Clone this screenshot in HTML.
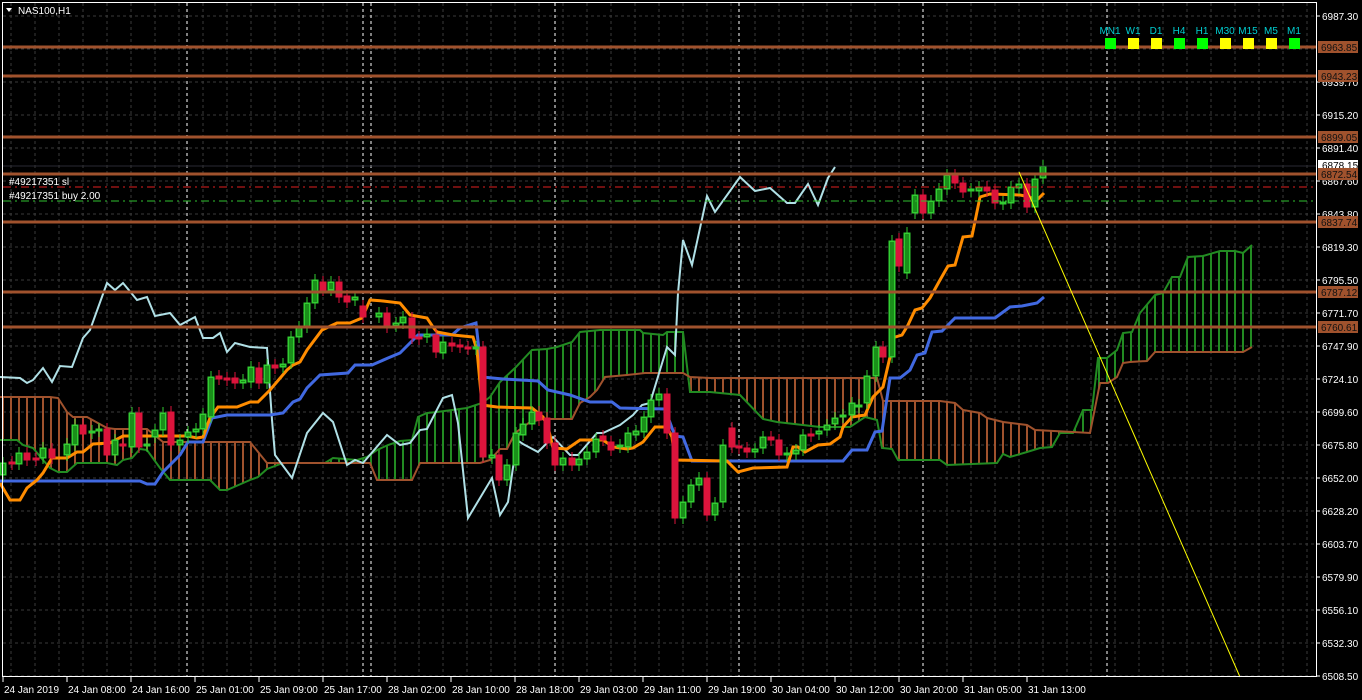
<!DOCTYPE html>
<html><head><meta charset="utf-8">
<style>
html,body{margin:0;padding:0;background:#000;width:1362px;height:700px;overflow:hidden}
svg{display:block}
text{font-family:"Liberation Sans",sans-serif;font-size:10px}
</style></head><body>
<svg id="s" width="1362" height="700" xmlns="http://www.w3.org/2000/svg">
<rect width="1362" height="700" fill="#000"/>
<g id="grid"></g>
<g id="cloud"></g>
<g id="lines"></g>
<g id="cand"></g>
<g id="over"></g>
</svg>
<script>
var NS="http://www.w3.org/2000/svg";
function el(p,t,a,txt){var e=document.createElementNS(NS,t);for(var k in a)e.setAttribute(k,a[k]);if(txt!=null)e.textContent=txt;document.getElementById(p).appendChild(e);return e;}
function pts(a){return a.map(function(p){return p[0]+","+p[1]}).join(" ");}
// grid
var gy=[16,49,82,115,148,181,214,247,280,313,346,379,412,445,478,511,544,577,610,643,676];
gy.forEach(function(y){el("grid","line",{x1:3,x2:1316,y1:y,y2:y,stroke:"#3a3a3a","stroke-dasharray":"3,3"});});
for(var x=11;x<1316;x+=24){el("grid","line",{x1:x,x2:x,y1:3,y2:676,stroke:"#3a3a3a","stroke-dasharray":"3,3"});}
[187,363,371,555,739,923,1107].forEach(function(x){el("grid","line",{x1:x,x2:x,y1:3,y2:676,stroke:"#fff","stroke-dasharray":"3,3"});});
// cloud
var A=[[0,440],[17,440],[23,445],[33,448],[43,460],[50,468],[58,472],[67,472],[77,463],[107,463],[117,465],[123,460],[132,458],[140,449],[147,450],[160,468],[170,480],[210,480],[220,490],[227,490],[250,480],[258,477],[267,469],[283,463],[325,463],[333,458],[357,460],[367,457],[377,450],[388,445],[400,441],[412,440],[418,417],[427,413],[437,412],[452,410],[467,408],[482,403],[490,397],[500,382],[515,368],[532,350],[547,349],[557,347],[572,342],[580,332],[600,330],[640,330],[643,333],[663,335],[667,332],[683,332],[690,392],[710,392],[740,395],[763,419],[777,422],[820,427],[850,427],[865,417],[877,420],[882,448],[892,449],[898,460],[940,460],[947,465],[997,463],[1003,454],[1010,457],[1027,452],[1040,448],[1052,447],[1060,433],[1073,433],[1083,410],[1092,410],[1098,358],[1107,358],[1117,350],[1123,333],[1132,332],[1140,313],[1155,295],[1163,293],[1172,277],[1180,277],[1188,257],[1203,256],[1220,251],[1235,251],[1243,253],[1252,245]];
var B=[[0,397],[50,397],[58,398],[67,412],[73,417],[87,417],[107,428],[115,429],[147,429],[163,442],[250,442],[267,463],[370,463],[377,480],[412,480],[420,463],[480,463],[490,460],[500,449],[507,449],[515,433],[530,422],[543,419],[572,419],[580,403],[590,397],[597,390],[605,377],[627,375],[645,373],[683,373],[690,377],[710,378],[877,378],[883,401],[940,401],[955,403],[963,410],[980,413],[987,418],[1003,422],[1027,425],[1035,430],[1073,432],[1090,433],[1100,383],[1108,383],[1117,377],[1123,363],[1130,362],[1147,361],[1155,352],[1243,352],[1252,347]];
function interp(a,x){for(var i=0;i<a.length-1;i++){if(x>=a[i][0]&&x<=a[i+1][0]){var t=(x-a[i][0])/((a[i+1][0]-a[i][0])||1);return a[i][1]+t*(a[i+1][1]-a[i][1]);}}return a[a.length-1][1];}
for(var x=3;x<=1252;x+=8){var ya=interp(A,x),yb=interp(B,x);el("cloud","line",{x1:x,x2:x,y1:ya,y2:yb,stroke:ya<yb?"#228b22":"#a0522d","stroke-width":2});}
el("cloud","polyline",{points:pts(A),fill:"none",stroke:"#228b22","stroke-width":2});
el("cloud","polyline",{points:pts(B),fill:"none",stroke:"#a0522d","stroke-width":2});
// horizontal levels
[[47,"6963.85"],[76,"6943.23"],[137,"6899.05"],[174,"6872.54"],[222,"6837.74"],[292,"6787.12"],[327,"6760.61"]].forEach(function(l){el("over","line",{x1:3,x2:1317,y1:l[0],y2:l[0],stroke:"#a0522d","stroke-width":3});});
el("over","line",{x1:3,x2:1316,y1:166,y2:166,stroke:"#2a2a33","stroke-width":1});
el("over","line",{x1:3,x2:1316,y1:187,y2:187,stroke:"#e02020","stroke-dasharray":"8,4,2,4"});
el("over","line",{x1:3,x2:1316,y1:201,y2:201,stroke:"#30c030","stroke-dasharray":"8,4,2,4"});
// lines
var LB=[[0,377],[20,378],[27,383],[33,380],[43,368],[52,382],[60,366],[72,367],[83,338],[90,330],[107,283],[115,290],[123,283],[137,300],[147,297],[155,316],[170,313],[180,325],[195,317],[203,338],[213,338],[220,333],[227,352],[235,343],[250,347],[267,348],[272,420],[275,455],[292,478],[307,433],[323,413],[333,422],[347,465],[355,460],[363,463],[387,435],[400,445],[410,443],[420,430],[427,429],[443,398],[452,395],[458,423],[468,518],[492,478],[500,515],[508,502],[517,440],[523,444],[538,452],[553,437],[570,455],[578,455],[597,433],[603,433],[620,425],[633,415],[642,405],[650,403],[667,347],[675,355],[678,293],[683,240],[692,265],[707,196],[715,212],[740,177],[755,191],[770,188],[787,203],[795,203],[808,184],[818,205],[828,178],[835,167]];
var OR=[[0,483],[10,500],[20,500],[27,488],[37,480],[43,473],[52,458],[67,458],[77,452],[83,452],[93,444],[110,443],[123,436],[187,436],[197,438],[203,437],[210,418],[218,407],[237,407],[250,402],[258,402],[270,390],[287,370],[293,365],[300,362],[307,350],[322,330],[337,323],[350,323],[362,318],[370,300],[383,301],[400,303],[410,315],[427,318],[433,327],[437,332],[453,335],[473,337],[477,350],[482,405],[497,407],[532,408],[543,417],[548,427],[553,448],[567,449],[580,440],[603,440],[613,447],[627,449],[633,448],[643,442],[655,427],[667,427],[672,437],[675,460],[727,461],[738,472],[753,468],[787,467],[793,447],[798,447],[805,452],[818,445],[830,444],[840,437],[843,427],[852,417],[865,415],[873,397],[883,387],[890,357],[892,338],[902,335],[908,325],[915,310],[922,308],[930,298],[940,280],[948,266],[955,265],[963,237],[972,236],[980,197],[990,194],[1020,195],[1030,197],[1035,202],[1044,193]];
var BL=[[0,481],[140,481],[147,484],[155,484],[163,472],[180,455],[188,442],[203,442],[212,418],[227,415],[270,415],[283,413],[293,402],[300,399],[307,388],[320,375],[348,373],[355,365],[372,365],[388,358],[400,353],[418,335],[452,335],[460,328],[476,323],[482,377],[503,379],[538,381],[548,390],[570,395],[590,402],[612,402],[620,408],[665,409],[675,436],[683,437],[692,461],[843,461],[852,450],[867,450],[875,432],[882,431],[890,378],[900,378],[910,370],[917,355],[925,353],[932,332],[942,331],[955,318],[995,318],[1010,307],[1022,306],[1037,303],[1044,297]];
el("lines","polyline",{points:pts(LB),fill:"none",stroke:"#b0e0e6","stroke-width":2});
// candles: x, top, bottom, color(g/r)
var C=[[3,463,475,'g'],[12,462,464,'r'],[19,453,464,'g'],[27,453,460,'r'],[36,458,460,'r'],[43,448,458,'g'],[52,449,458,'r'],[67,444,455,'g'],[75,425,445,'g'],[83,425,434,'r'],[92,431,433,'g'],[99,429,431,'g'],[107,429,455,'r'],[115,440,455,'g'],[123,444,446,'r'],[132,413,447,'g'],[139,413,447,'r'],[147,444,446,'g'],[155,430,437,'g'],[163,413,430,'g'],[171,412,445,'r'],[180,440,445,'g'],[188,432,437,'g'],[196,429,432,'g'],[203,414,429,'g'],[211,377,417,'g'],[219,376,379,'r'],[227,378,380,'r'],[235,378,383,'r'],[243,380,383,'g'],[251,367,382,'g'],[259,368,383,'r'],[267,365,383,'g'],[275,365,368,'r'],[283,364,367,'g'],[291,337,363,'g'],[299,327,337,'g'],[307,303,327,'g'],[315,280,303,'g'],[323,282,290,'r'],[331,282,290,'g'],[339,282,297,'r'],[347,296,302,'r'],[355,297,300,'g'],[363,306,317,'r'],[379,313,317,'g'],[387,313,327,'r'],[396,323,326,'g'],
[403,317,323,'g'],[412,318,338,'r'],[419,337,339,'r'],[427,334,337,'g'],[436,335,352,'r'],[443,342,353,'g'],[452,343,346,'r'],[460,345,347,'r'],[468,347,349,'r'],[476,347,349,'g'],[483,347,457,'r'],[492,455,458,'g'],[499,455,480,'r'],[507,465,480,'g'],[516,433,465,'g'],[523,424,435,'g'],[532,412,424,'g'],[539,412,420,'r'],[547,418,443,'r'],[555,443,465,'r'],[563,458,465,'g'],[572,458,465,'r'],[579,459,465,'g'],[587,452,459,'g'],[596,439,452,'g'],[603,436,440,'r'],[611,442,450,'r'],[620,445,447,'g'],[628,433,447,'g'],[636,431,435,'g'],[644,417,432,'g'],[651,400,417,'g'],[659,394,400,'g'],[667,394,433,'r'],[675,433,518,'r'],[683,502,518,'g'],[691,485,502,'g'],[699,478,485,'g'],[707,478,515,'r'],[715,503,515,'g'],[723,445,502,'g'],[732,428,447,'r'],[739,446,448,'r'],[747,448,452,'r'],[755,449,452,'g'],[763,437,448,'g'],[771,437,440,'r'],[779,440,455,'r'],[787,453,455,'g'],[796,450,454,'g'],[803,435,450,'g'],[811,434,436,'r'],[819,431,434,'g'],[827,425,430,'g'],[835,418,424,'g'],[843,415,417,'g'],[852,403,415,'g'],[859,405,407,'g'],[867,376,403,'g'],[876,347,376,'g'],[883,347,357,'r'],[892,241,357,'g'],[899,239,266,'r'],[907,233,273,'g'],[915,195,213,'g'],[923,195,213,'r'],[931,201,213,'g'],[939,189,201,'g'],[947,175,189,'g'],[955,175,183,'r'],[963,183,192,'r'],[971,189,191,'g'],[979,187,191,'g'],[987,187,191,'r'],[995,190,203,'r'],[1003,202,204,'g'],[1011,187,203,'g'],[1019,184,188,'g'],[1027,184,207,'r'],[1035,179,207,'g'],[1043,166,178,'g']];
C.forEach(function(c){var col=c[3]=='g'?'#32cd32':'#dc143c';
el("cand","line",{x1:c[0],x2:c[0],y1:c[1]-6,y2:c[2]+6,stroke:col});
el("cand","rect",{x:c[0]-3,y:c[1],width:6,height:Math.max(2,c[2]-c[1]),fill:col,stroke:c[3]=='g'?'#32cd32':'#dc143c'});
if(c[3]=='g')el("cand","rect",{x:c[0]-2,y:c[1]+1,width:4,height:Math.max(0,c[2]-c[1]-2),fill:"#1a8f1a"});});
el("lines","polyline",{points:pts(BL),fill:"none",stroke:"#4169e1","stroke-width":3});
el("lines","polyline",{points:pts(OR),fill:"none",stroke:"#ff8c00","stroke-width":3});
el("over","line",{x1:1019,y1:172,x2:1240,y2:677,stroke:"#ffff00","stroke-width":1});
// border
el("over","rect",{x:2.5,y:2.5,width:1314,height:674,fill:"none",stroke:"#fff"});
// axis labels
var al=[[16,"6987.30"],[82,"6939.70"],[115,"6915.20"],[148,"6891.40"],[181,"6867.60"],[214,"6843.80"],[247,"6819.30"],[280,"6795.50"],[313,"6771.70"],[346,"6747.90"],[379,"6724.10"],[412,"6699.60"],[445,"6675.80"],[478,"6652.00"],[511,"6628.20"],[544,"6603.70"],[577,"6579.90"],[610,"6556.10"],[643,"6532.30"],[676,"6508.50"]];
al.forEach(function(a){el("over","line",{x1:1317,x2:1320,y1:a[0],y2:a[0],stroke:"#fff"});el("over","text",{x:1322,y:a[0]+4,fill:"#fff"},a[1]);});
el("over","rect",{x:1318,y:160,width:40,height:11,fill:"#fff"});
el("over","text",{x:1322,y:169,fill:"#000"},"6878.15");
[[47,"6963.85"],[76,"6943.23"],[137,"6899.05"],[174,"6872.54"],[222,"6837.74"],[292,"6787.12"],[327,"6760.61"]].forEach(function(l){el("over","rect",{x:1318,y:l[0]-6,width:40,height:12,fill:"#a0522d"});el("over","text",{x:1321,y:l[0]+4,fill:"#111"},l[1]);});
var bl=["24 Jan 2019","24 Jan 08:00","24 Jan 16:00","25 Jan 01:00","25 Jan 09:00","25 Jan 17:00","28 Jan 02:00","28 Jan 10:00","28 Jan 18:00","29 Jan 03:00","29 Jan 11:00","29 Jan 19:00","30 Jan 04:00","30 Jan 12:00","30 Jan 20:00","31 Jan 05:00","31 Jan 13:00"];
bl.forEach(function(t,i){var x=3+i*64;el("over","line",{x1:x,x2:x,y1:677,y2:682,stroke:"#fff"});el("over","text",{x:x+1,y:693,fill:"#fff","font-size":"9.5px"},t);});
// title
el("over","polygon",{points:"6,8 12,8 9,12",fill:"#fff"});
el("over","text",{x:18,y:14,fill:"#fff"},"NAS100,H1");
el("over","text",{x:9,y:185,fill:"#fff","font-size":"9px"},"#49217351 sl");
el("over","text",{x:9,y:199,fill:"#fff","font-size":"9px"},"#49217351 buy 2.00");
// TF panel
var tf=[["MN1",1110,"#00ff00"],["W1",1133,"#ffff00"],["D1",1156,"#ffff00"],["H4",1179,"#00ff00"],["H1",1202,"#00ff00"],["M30",1225,"#ffff00"],["M15",1248,"#ffff00"],["M5",1271,"#ffff00"],["M1",1294,"#00ff00"]];
tf.forEach(function(t){el("over","text",{x:t[1],y:34,fill:"#00ced1","text-anchor":"middle","font-size":"11px"},t[0]);el("over","rect",{x:t[1]-5,y:38,width:11,height:11,fill:t[2]});});
</script>
</body></html>
